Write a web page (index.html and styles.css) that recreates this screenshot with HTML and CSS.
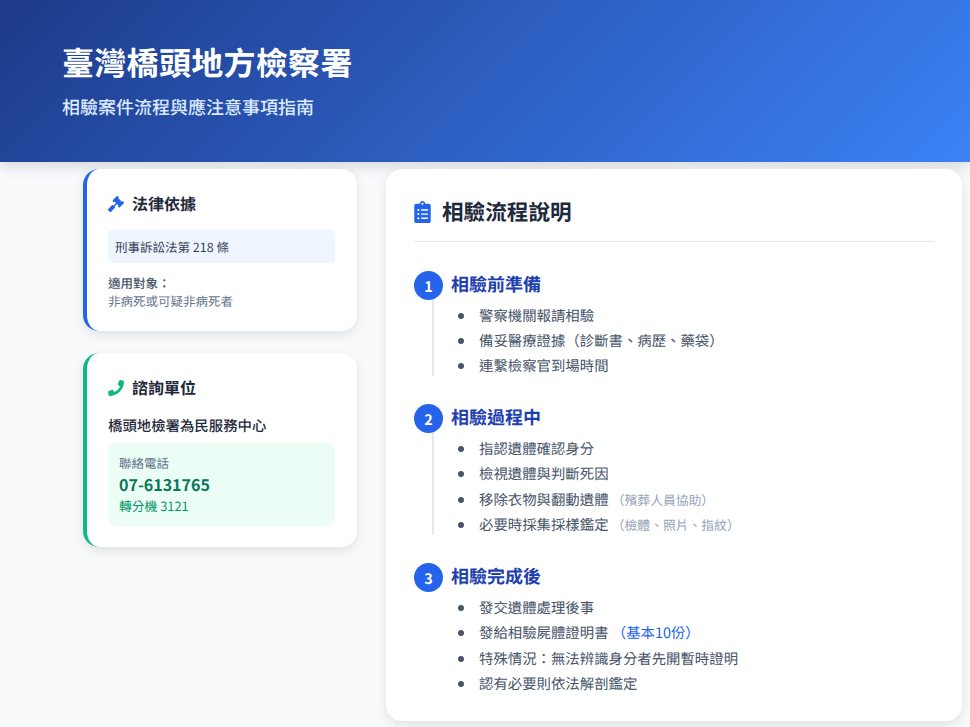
FILE: index.html
```html
<!DOCTYPE html>
<html lang="zh-Hant">
<head>
    <meta charset="UTF-8">
    <meta name="viewport" content="width=device-width, initial-scale=1.0">
    <title>臺灣橋頭地方檢察署</title>
    <link rel="stylesheet" href="styles.css">
</head>
<body>
    <header class="encabezado">
        <h1>臺灣橋頭地方檢察署</h1>
        <p>相驗案件流程與應注意事項指南</p>
    </header>

    <div class="contenido">
        <aside class="lateral">
            <section class="tarjeta tarjeta-azul">
                <h3>
                    <svg class="icono icono-azul" viewBox="0 0 512 512"><path d="M504.971 199.362l-22.627-22.627c-9.373-9.373-24.569-9.373-33.941 0l-5.657 5.657L329.608 69.255l5.657-5.657c9.373-9.373 9.373-24.569 0-33.941L312.638 7.029c-9.373-9.373-24.569-9.373-33.941 0L154.246 131.48c-9.373 9.373-9.373 24.569 0 33.941l22.627 22.627c9.373 9.373 24.569 9.373 33.941 0l5.657-5.657 39.598 39.598-81.04 81.04-5.657-5.657c-12.497-12.497-32.758-12.497-45.255 0L9.373 412.118c-12.497 12.497-12.497 32.758 0 45.255l45.255 45.255c12.497 12.497 32.758 12.497 45.255 0l114.745-114.745c12.497-12.497 12.497-32.758 0-45.255l-5.657-5.657 81.04-81.04 39.598 39.598-5.657 5.657c-9.373 9.373-9.373 24.569 0 33.941l22.627 22.627c9.373 9.373 24.569 9.373 33.941 0l124.451-124.451c9.372-9.372 9.372-24.568 0-33.941z"/></svg>
                    法律依據
                </h3>
                <div class="ley">刑事訴訟法第 218 條</div>
                <div class="aplica">
                    <strong>適用對象：</strong>
                    <span>非病死或可疑非病死者</span>
                </div>
            </section>

            <section class="tarjeta tarjeta-verde">
                <h3>
                    <svg class="icono icono-verde" viewBox="0 0 512 512"><path d="M493.4 24.6l-104-24c-11.3-2.6-22.9 3.3-27.5 13.9l-48 112c-4.2 9.8-1.4 21.3 6.9 28l60.6 49.6c-36 76.7-98.9 140.5-177.2 177.2l-49.6-60.6c-6.8-8.3-18.2-11.1-28-6.9l-112 48C3.9 366.5-2 378.1.6 389.4l24 104C27.1 504.2 36.7 512 48 512c256.1 0 464-207.5 464-464 0-11.2-7.7-20.9-18.6-23.4z"/></svg>
                    諮詢單位
                </h3>
                <div class="unidad">橋頭地檢署為民服務中心</div>
                <div class="contacto">
                    <div class="contacto-label">聯絡電話</div>
                    <div class="telefono">07-6131765</div>
                    <div class="extension">轉分機 3121</div>
                </div>
            </section>
        </aside>

        <main class="principal">
            <h2>
                <svg class="icono-titulo" viewBox="0 0 384 512"><path d="M336 64h-80c0-35.3-28.7-64-64-64s-64 28.7-64 64H48C21.5 64 0 85.5 0 112v352c0 26.5 21.5 48 48 48h288c26.5 0 48-21.5 48-48V112c0-26.5-21.5-48-48-48zM96 424c-13.3 0-24-10.7-24-24s10.7-24 24-24 24 10.7 24 24-10.7 24-24 24zm0-96c-13.3 0-24-10.7-24-24s10.7-24 24-24 24 10.7 24 24-10.7 24-24 24zm0-96c-13.3 0-24-10.7-24-24s10.7-24 24-24 24 10.7 24 24-10.7 24-24 24zm96-192c13.3 0 24 10.7 24 24s-10.7 24-24 24-24-10.7-24-24 10.7-24 24-24zm128 368c0 4.4-3.6 8-8 8H168c-4.4 0-8-3.6-8-8v-16c0-4.4 3.6-8 8-8h144c4.4 0 8 3.6 8 8v16zm0-96c0 4.4-3.6 8-8 8H168c-4.4 0-8-3.6-8-8v-16c0-4.4 3.6-8 8-8h144c4.4 0 8 3.6 8 8v16zm0-96c0 4.4-3.6 8-8 8H168c-4.4 0-8-3.6-8-8v-16c0-4.4 3.6-8 8-8h144c4.4 0 8 3.6 8 8v16z"/></svg>
                相驗流程說明
            </h2>

            <div class="paso">
                <div class="paso-titulo"><span class="numero">1</span><h4>相驗前準備</h4></div>
                <ul class="paso-lista">
                    <li>警察機關報請相驗</li>
                    <li>備妥醫療證據（診斷書、病歷、藥袋）</li>
                    <li>連繫檢察官到場時間</li>
                </ul>
            </div>

            <div class="paso">
                <div class="paso-titulo"><span class="numero">2</span><h4>相驗過程中</h4></div>
                <ul class="paso-lista">
                    <li>指認遺體確認身分</li>
                    <li>檢視遺體與判斷死因</li>
                    <li>移除衣物與翻動遺體 <span class="nota">（殯葬人員協助）</span></li>
                    <li>必要時採集採樣鑑定 <span class="nota">（檢體、照片、指紋）</span></li>
                </ul>
            </div>

            <div class="paso paso-final">
                <div class="paso-titulo"><span class="numero">3</span><h4>相驗完成後</h4></div>
                <ul class="paso-lista">
                    <li>發交遺體處理後事</li>
                    <li>發給相驗屍體證明書 <span class="resaltado">（基本10份）</span></li>
                    <li>特殊情況：無法辨識身分者先開暫時證明</li>
                    <li>認有必要則依法解剖鑑定</li>
                </ul>
            </div>
        </main>
    </div>
</body>
</html>
```

FILE: styles.css
```css
body {
    margin: 0;
    background-color: #f8fafc;
    font-family: "Noto Sans CJK TC", "Noto Sans", sans-serif;
    color: #1e293b;
    text-rendering: geometricPrecision;
}

.encabezado {
    height: 162px;
    box-sizing: border-box;
    padding: 39px 62px 0;
    background: linear-gradient(135deg, #1e3a8a, #3b82f6);
    color: white;
    box-shadow: 0 4px 15px rgba(0, 0, 0, 0.15);
}

.encabezado h1 {
    margin: 0;
    font-size: 32px;
    line-height: 46px;
    font-weight: 700;
    letter-spacing: 0.3px;
}

.encabezado p {
    margin: 9px 0 0;
    font-size: 18px;
    line-height: 26px;
    font-weight: 500;
    color: #dbeafe;
}

.contenido {
    display: grid;
    grid-template-columns: 274px 576px;
    gap: 29px;
    align-items: start;
    padding: 7px 0 6px 83px;
}

.lateral {
    display: flex;
    flex-direction: column;
    gap: 22px;
}

.tarjeta {
    background-color: #ffffff;
    border-radius: 16px;
    box-shadow: 0 4px 12px rgba(0, 0, 0, 0.1);
    padding: 23px 22px 21px 21px;
}

.tarjeta-azul {
    border-left: 4px solid #2563eb;
}

.tarjeta-verde {
    border-left: 4px solid #10b981;
}

.tarjeta h3 {
    display: flex;
    align-items: center;
    gap: 8px;
    margin: 0 0 15px;
    font-size: 16px;
    line-height: 23px;
    font-weight: 700;
}

.icono {
    width: 16px;
    height: 16px;
}

.icono-azul {
    fill: #2563eb;
}

.icono-verde {
    fill: #10b981;
}

.ley {
    background-color: #eff6ff;
    border-radius: 4px;
    padding: 7px;
    font-size: 12.5px;
    line-height: 19px;
    color: #334155;
}

.aplica {
    margin-top: 11px;
    font-size: 12.5px;
    line-height: 18px;
    color: #64748b;
}

.aplica strong {
    display: block;
    color: #475569;
    font-weight: 500;
}

.aplica span {
    display: block;
}

.unidad {
    margin-top: 16px;
    margin-bottom: 7px;
    font-size: 14.4px;
    line-height: 21px;
    font-weight: 500;
}

.contacto {
    background-color: #ecfdf5;
    border-radius: 8px;
    padding: 11px;
}

.contacto-label {
    font-size: 12.5px;
    line-height: 18px;
    color: #64748b;
}

.telefono {
    font-size: 16px;
    line-height: 25px;
    font-weight: 700;
    color: #047857;
}

.extension {
    font-size: 12.8px;
    line-height: 18px;
    color: #059669;
}

.principal {
    background-color: #ffffff;
    border-radius: 16px;
    box-shadow: 0 4px 12px rgba(0, 0, 0, 0.1);
    padding: 28px 28px 27px;
}

.principal h2 {
    display: flex;
    align-items: center;
    gap: 11px;
    margin: 0 0 29px;
    padding-bottom: 14px;
    border-bottom: 1px solid #e2e8f0;
    font-size: 21.6px;
    line-height: 30px;
    font-weight: 700;
}

.icono-titulo {
    width: 17px;
    height: 22px;
    fill: #2563eb;
}

.paso {
    margin-bottom: 28px;
}

.paso-final {
    margin-bottom: 0;
}

.paso-titulo {
    display: flex;
    align-items: flex-start;
    gap: 8px;
}

.numero {
    display: flex;
    align-items: center;
    justify-content: center;
    box-sizing: border-box;
    width: 29px;
    height: 29px;
    padding-top: 1px;
    border-radius: 50%;
    background-color: #2563eb;
    color: white;
    font-size: 14.4px;
    font-weight: 700;
}

.paso-titulo h4 {
    margin: 0;
    font-size: 18px;
    line-height: 26px;
    font-weight: 700;
    color: #1e40af;
}

.paso-lista {
    list-style: none;
    margin: 0 0 0 18px;
    padding: 5.5px 0 0 24px;
    border-left: 2px solid #e2e8f0;
    color: #475569;
    font-size: 14.4px;
}

.paso-final .paso-lista {
    border-left-color: transparent;
}

.paso-lista li {
    line-height: 20px;
    margin-bottom: 5.44px;
}

.paso-lista li:last-child {
    margin-bottom: 0;
}

.paso-lista li::before {
    content: "";
    display: inline-block;
    width: 6px;
    height: 6px;
    margin-right: 15px;
    border-radius: 50%;
    background-color: #475569;
    vertical-align: 2px;
}

.nota {
    font-size: 12.8px;
    line-height: 1;
    color: #94a3b8;
}

.resaltado {
    line-height: 1;
    color: #2563eb;
}
```
